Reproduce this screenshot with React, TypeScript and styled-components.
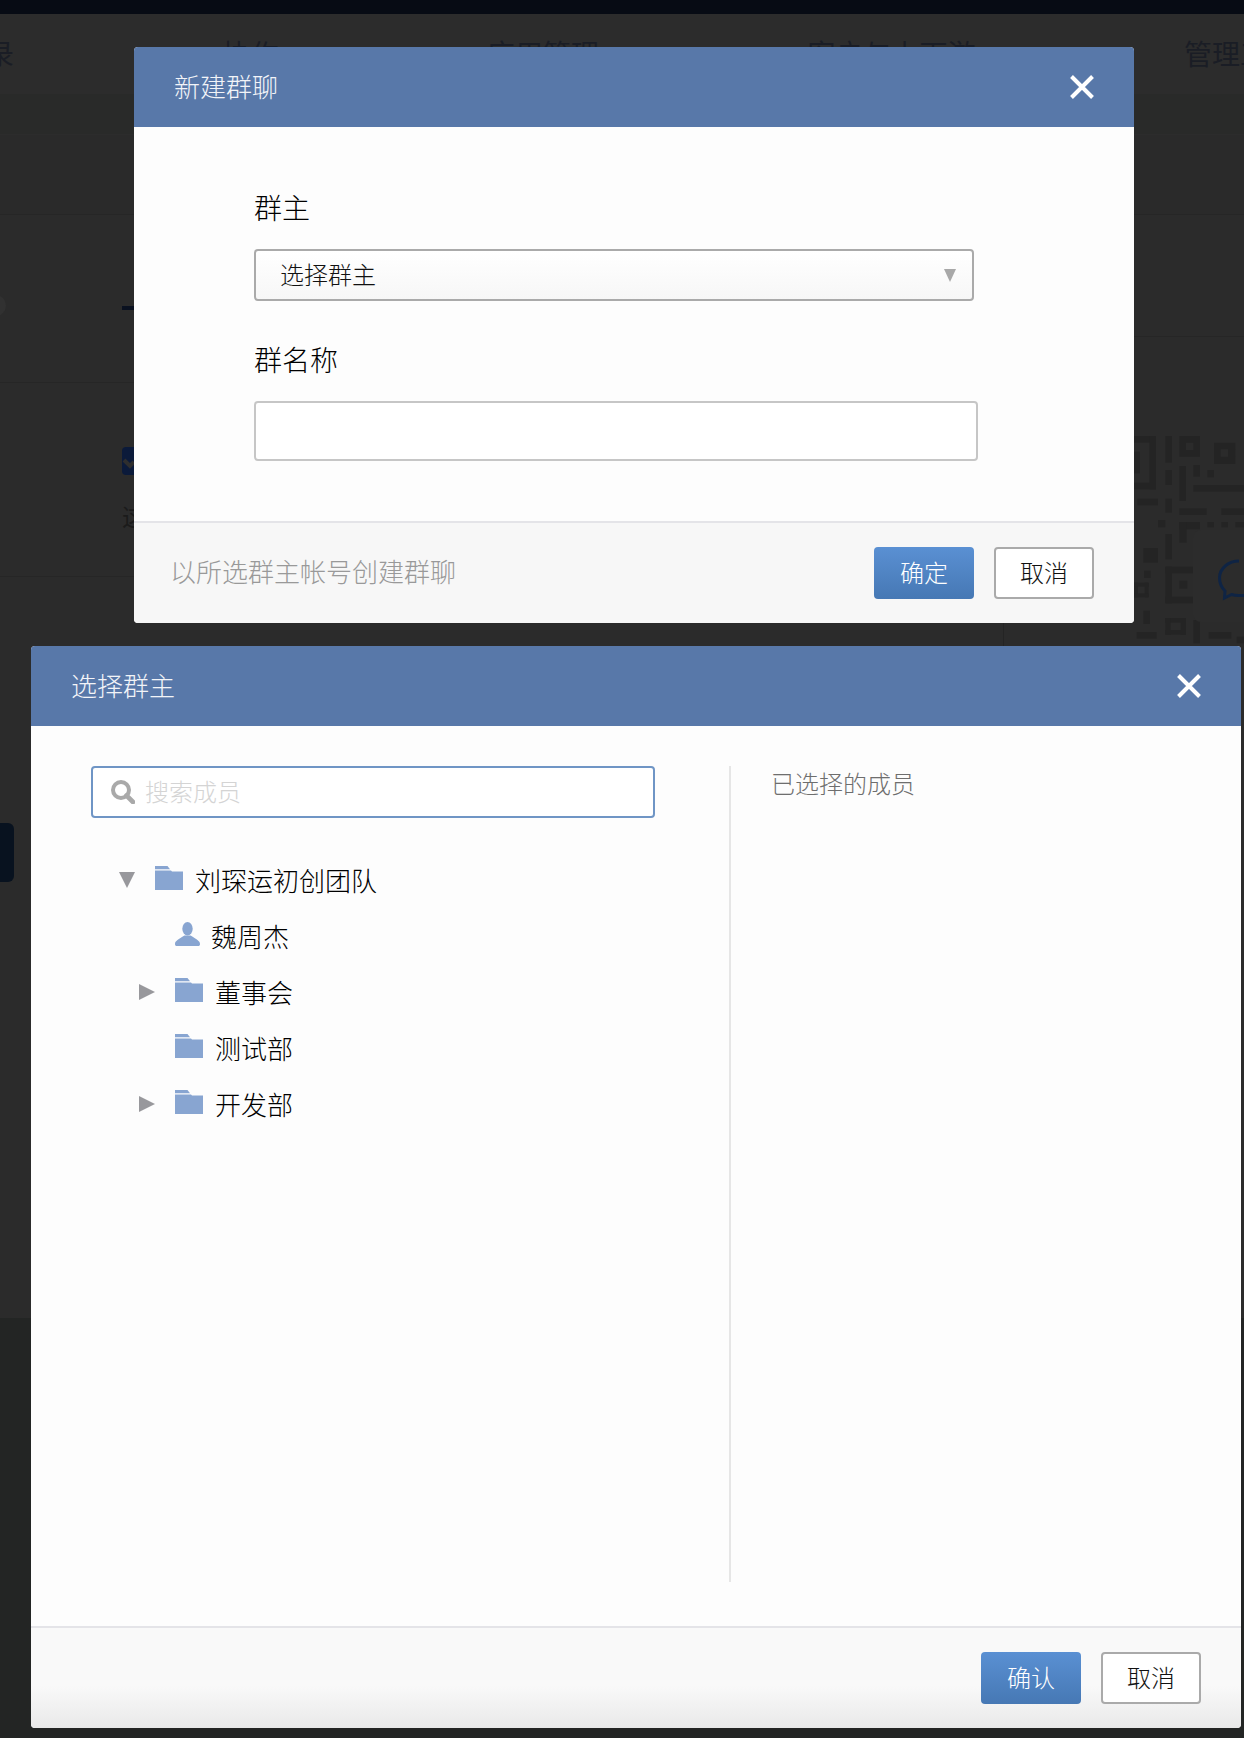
import React from 'react';
import styled, { createGlobalStyle } from 'styled-components';

const GlobalStyle = createGlobalStyle`
  html, body {
    margin: 0;
    padding: 0;
    background: #232524;
  }
  * {
    box-sizing: border-box;
  }
  body {
    font-family: "Noto Sans CJK SC", "Liberation Sans", sans-serif;
  }
`;

const QR_CELLS = [
  [0, 48, 78, 20], [58, 48, 20, 160], [0, 188, 78, 20], [12, 95, 18, 65],
  [106, 48, 20, 80], [106, 150, 20, 45], [148, 138, 20, 105], [190, 135, 20, 35],
  [232, 150, 20, 22], [190, 195, 152, 20], [22, 236, 62, 20], [106, 236, 20, 42],
  [148, 265, 82, 20], [274, 265, 68, 20], [84, 300, 22, 22], [148, 306, 62, 22],
  [148, 306, 22, 62], [232, 306, 20, 16], [274, 306, 20, 16], [316, 306, 26, 16],
  [106, 342, 20, 76], [40, 384, 44, 44], [42, 452, 20, 22], [106, 440, 84, 20],
  [106, 440, 20, 110], [106, 530, 84, 20], [148, 482, 24, 24], [12, 488, 12, 44],
  [12, 488, 44, 12], [44, 488, 12, 44], [12, 520, 44, 12], [40, 572, 20, 40],
  [106, 594, 62, 14], [106, 594, 16, 50], [152, 594, 16, 50], [106, 630, 62, 14],
  [20, 636, 60, 20], [190, 600, 20, 70], [236, 636, 68, 20], [320, 650, 22, 20],
];

function QrCode() {
  return (
    <QrSvg viewBox="0 0 342 690">
      {QR_CELLS.map(([x, y, w, h], i) => (
        <rect key={i} x={x} y={y} width={w} height={h} fill="#242424" />
      ))}
      <path d="M148 48h62v62h-62z M168 68v22h22v-22z" fill="#242424" fillRule="evenodd" />
      <path d="M252 68h64v64h-64z M272 88v22h22v-22z" fill="#242424" fillRule="evenodd" />
    </QrSvg>
  );
}

function CloseIcon() {
  return (
    <svg width="24" height="24" viewBox="0 0 24 24">
      <path d="M1.5 1.5L22.5 22.5M22.5 1.5L1.5 22.5" stroke="#fff" strokeWidth="4" fill="none" />
    </svg>
  );
}

function SearchIcon() {
  return (
    <SearchSvg width="24" height="24" viewBox="0 0 24 24">
      <circle cx="10" cy="10" r="8" stroke="#a9a9a9" strokeWidth="4" fill="none" />
      <path d="M15.5 15.5L22 22" stroke="#a9a9a9" strokeWidth="4.6" strokeLinecap="round" />
    </SearchSvg>
  );
}

function FolderIcon() {
  return (
    <TreeSvg $gap={12} width="28" height="24" viewBox="0 0 28 24">
      <path d="M0 0H12.5L15 3.2H0Z" fill="#88a5d1" />
      <path d="M0 4.6H16L17 5.6H28V24H0Z" fill="#88a5d1" />
    </TreeSvg>
  );
}

function PersonIcon() {
  return (
    <TreeSvg $gap={11} width="25" height="24" viewBox="0 0 25 24">
      <ellipse cx="12.5" cy="6.8" rx="5.2" ry="6.8" fill="#88a5d1" />
      <path
        d="M0 22C0 19 3.6 17.4 9.4 13.6H15.6C21.4 17.4 25 19 25 22C25 23.4 24.4 24 23 24H2C.6 24 0 23.4 0 22Z"
        fill="#88a5d1"
      />
    </TreeSvg>
  );
}

type TreeNode = {
  label: string;
  level: number;
  kind: 'folder' | 'person';
  caret?: 'open' | 'closed';
};

const TREE: TreeNode[] = [
  { label: '刘琛运初创团队', level: 0, kind: 'folder', caret: 'open' },
  { label: '魏周杰', level: 1, kind: 'person' },
  { label: '董事会', level: 1, kind: 'folder', caret: 'closed' },
  { label: '测试部', level: 1, kind: 'folder' },
  { label: '开发部', level: 1, kind: 'folder', caret: 'closed' },
];

function App() {
  return (
    <Page>
      <GlobalStyle />
      <TopBar />
      <NavBar>
        <NavItem>通讯录</NavItem>
        <NavItem>协作</NavItem>
        <NavItem>应用管理</NavItem>
        <NavItem>客户与上下游</NavItem>
        <NavItem>管理工具</NavItem>
      </NavBar>
      <SubBar />
      <ToolBand />
      <Main>
        <LeftPane>
          <SectionHead>
            <Pill />
            <Dash />
          </SectionHead>
          <SectionOption>
            <CheckBox>
              <svg width="12" height="28" viewBox="0 0 12 28">
                <path d="M2 13L8 19L12 15" stroke="#2e2e2e" strokeWidth="4" fill="none" />
              </svg>
            </CheckBox>
            <OptionText>这</OptionText>
          </SectionOption>
          <SectionRest>
            <SideTab />
          </SectionRest>
        </LeftPane>
        <RightPane>
          <RightHead />
          <RightBody>
            <QrCode />
            <ChatCard>
              <svg width="51" height="60" viewBox="0 0 51 60">
                <path
                  d="M46 8C36 8 26.5 15 26.5 25C26.5 31 29 35 32 38L31.5 45L38.5 41.5C41 42.3 43.5 42.5 46 42.5H51"
                  stroke="#0f2444"
                  strokeWidth="3"
                  fill="none"
                />
              </svg>
            </ChatCard>
          </RightBody>
        </RightPane>
      </Main>
      <BottomBand />

      <OwnerDialog>
        <DialogHeader>
          <DialogTitle>新建群聊</DialogTitle>
          <CloseIcon />
        </DialogHeader>
        <OwnerBody>
          <FieldLabel>群主</FieldLabel>
          <SelectBox>
            <span>选择群主</span>
            <SelectArrow />
          </SelectBox>
          <FieldLabel $second>群名称</FieldLabel>
          <NameInput />
        </OwnerBody>
        <DialogFooter>
          <FooterHint>以所选群主帐号创建群聊</FooterHint>
          <FooterButtons>
            <ActionButton $primary>确定</ActionButton>
            <ActionButton>取消</ActionButton>
          </FooterButtons>
        </DialogFooter>
      </OwnerDialog>

      <PickerDialog>
        <DialogHeader>
          <DialogTitle>选择群主</DialogTitle>
          <CloseIcon />
        </DialogHeader>
        <PickerBody>
          <PickerLeft>
            <SearchBox>
              <SearchIcon />
              <SearchInput placeholder="搜索成员" />
            </SearchBox>
            <TreeList>
              {TREE.map((node) => (
                <TreeRow key={node.label} $level={node.level}>
                  <CaretSlot>{node.caret && <Caret $open={node.caret === 'open'} />}</CaretSlot>
                  {node.kind === 'folder' ? <FolderIcon /> : <PersonIcon />}
                  <TreeLabel>{node.label}</TreeLabel>
                </TreeRow>
              ))}
            </TreeList>
          </PickerLeft>
          <PickerRight>
            <SelectedTitle>已选择的成员</SelectedTitle>
          </PickerRight>
        </PickerBody>
        <DialogFooter $shaded>
          <span />
          <FooterButtons>
            <ActionButton $primary>确认</ActionButton>
            <ActionButton>取消</ActionButton>
          </FooterButtons>
        </DialogFooter>
      </PickerDialog>
    </Page>
  );
}

export default App;

const Page = styled.div`
  position: relative;
  width: 1244px;
  height: 1738px;
  overflow: hidden;
  background: #2b2b2b;
`;

const TopBar = styled.div`
  height: 14px;
  background: #070b14;
`;

const NavBar = styled.nav`
  display: flex;
  gap: 208.5px;
  height: 80px;
  margin-left: -70px;
  padding-top: 19px;
  background: #2c2c2c;
  white-space: nowrap;
`;

const NavItem = styled.span`
  font-size: 28px;
  line-height: 40px;
  font-weight: 400;
  color: #1a1d25;
`;

const SubBar = styled.div`
  height: 40px;
  background: #292a29;
`;

const ToolBand = styled.div`
  height: 81px;
  background: #2a2a2a;
  border-top: 1px solid #2c2c2c;
  border-bottom: 1px solid #262626;
`;

const Main = styled.div`
  display: flex;
  height: 1103px;
`;

const LeftPane = styled.div`
  width: 1004px;
  border-right: 1px solid #242424;
`;

const SectionHead = styled.div`
  display: flex;
  align-items: flex-start;
  height: 168px;
  padding-top: 80px;
  border-bottom: 1px solid #262626;
`;

const Pill = styled.div`
  width: 21px;
  height: 21px;
  margin-left: -15px;
  border-radius: 50%;
  background: #313131;
`;

const Dash = styled.div`
  width: 20px;
  height: 4px;
  margin: 11px 0 0 116px;
  background: #0a1120;
`;

const SectionOption = styled.div`
  height: 194px;
  padding: 64px 0 0 122px;
  border-bottom: 1px solid #262626;
`;

const CheckBox = styled.div`
  width: 28px;
  height: 28px;
  border-radius: 4px;
  background: #0b1a3a;
`;

const OptionText = styled.div`
  margin-top: 26px;
  font-size: 24px;
  line-height: 30px;
  font-weight: 400;
  color: #1b1b1b;
`;

const SectionRest = styled.div`
  padding-top: 246px;
`;

const SideTab = styled.div`
  width: 14px;
  height: 59px;
  border-radius: 0 6px 6px 0;
  background: #08121f;
`;

const RightPane = styled.div`
  flex: 1;
`;

const RightHead = styled.div`
  height: 122px;
  border-bottom: 1px solid #262626;
`;

const RightBody = styled.div`
  position: relative;
  padding: 83px 0 0 126px;
`;

const QrSvg = styled.svg`
  display: block;
  width: 114px;
  height: 230px;
`;

const ChatCard = styled.div`
  position: absolute;
  top: 193px;
  right: 0;
  width: 51px;
  height: 92px;
  padding-top: 25px;
  border-radius: 8px 0 0 8px;
  background: #2c2c2c;

  svg {
    display: block;
    margin-top: -2px;
  }
`;

const BottomBand = styled.div`
  height: 420px;
  background: #232524;
`;

const Dialog = styled.section`
  position: absolute;
  display: flex;
  flex-direction: column;
  border-radius: 4px;
  overflow: hidden;
  background: #fdfdfd;
`;

const OwnerDialog = styled(Dialog)`
  left: 134px;
  top: 47px;
  width: 1000px;
  height: 576px;
`;

const PickerDialog = styled(Dialog)`
  left: 31px;
  top: 646px;
  width: 1210px;
  height: 1082px;
`;

const DialogHeader = styled.header`
  display: flex;
  align-items: center;
  justify-content: space-between;
  flex: none;
  height: 80px;
  padding: 0 40px;
  background: #5878a9;
`;

const DialogTitle = styled.h2`
  margin: 0;
  padding-bottom: 2px;
  font-size: 26px;
  line-height: 36px;
  font-weight: 300;
  color: #f2f4f8;
`;

const OwnerBody = styled.div`
  flex: 1;
  padding: 60px 0 0 120px;
`;

const FieldLabel = styled.label<{ $second?: boolean }>`
  display: block;
  margin-top: ${(p) => (p.$second ? '38px' : '0')};
  margin-bottom: 22px;
  font-size: 28px;
  line-height: 40px;
  font-weight: 300;
  color: #000;
`;

const SelectBox = styled.div`
  display: flex;
  align-items: center;
  justify-content: space-between;
  width: 720px;
  height: 52px;
  padding: 0 16px 0 24px;
  border: 2px solid #aaa;
  border-radius: 4px;
  background: linear-gradient(#fff, #f7f7f7);
  font-size: 24px;
  font-weight: 300;
  color: #111;

  span {
    padding-bottom: 3px;
  }
`;

const SelectArrow = styled.i`
  width: 0;
  height: 0;
  border-style: solid;
  border-width: 13px 6px 0;
  border-color: #a8a8a8 transparent transparent;
`;

const NameInput = styled.input`
  display: block;
  width: 724px;
  height: 60px;
  border: 2px solid #c6c6c6;
  border-radius: 4px;
  background: #fff;
  outline: none;
`;

const DialogFooter = styled.footer<{ $shaded?: boolean }>`
  display: flex;
  align-items: center;
  justify-content: space-between;
  flex: none;
  height: 102px;
  padding: 0 40px 0 36px;
  border-top: 2px solid #e4e4e8;
  background: ${(p) =>
    p.$shaded ? 'linear-gradient(#f9f9f9 58%, #e9e9e9)' : '#f7f7f7'};
`;

const FooterHint = styled.span`
  padding-bottom: 5px;
  font-size: 26px;
  font-weight: 300;
  color: #999;
`;

const FooterButtons = styled.div`
  display: flex;
  gap: 20px;
`;

const ActionButton = styled.button<{ $primary?: boolean }>`
  width: 100px;
  height: 52px;
  padding: 0 0 4px;
  border-radius: 4px;
  border: ${(p) => (p.$primary ? '0' : '2px solid #aaa')};
  background: ${(p) => (p.$primary ? 'linear-gradient(#5a90d3, #4678b4)' : '#fff')};
  color: ${(p) => (p.$primary ? '#fff' : '#111')};
  font-family: inherit;
  font-size: 24px;
  font-weight: 300;
`;

const PickerBody = styled.div`
  display: flex;
  flex: 1;
  padding: 40px 0 0 60px;
`;

const PickerLeft = styled.div`
  width: 640px;
  height: 816px;
  border-right: 2px solid #e6e6e6;
`;

const SearchBox = styled.div`
  display: flex;
  align-items: center;
  width: 564px;
  height: 52px;
  padding-left: 18px;
  border: 2px solid #6f95c5;
  border-radius: 4px;
  background: #fff;
`;

const SearchSvg = styled.svg`
  flex: none;
`;

const SearchInput = styled.input`
  flex: 1;
  min-width: 0;
  margin-left: 10px;
  padding: 0 0 3px;
  border: 0;
  outline: none;
  background: transparent;
  font-family: inherit;
  font-size: 24px;
  font-weight: 300;

  &::placeholder {
    color: #d4d4d4;
    opacity: 1;
  }
`;

const TreeList = styled.div`
  margin-top: 32px;
`;

const TreeRow = styled.div<{ $level: number }>`
  display: flex;
  align-items: center;
  height: 56px;
  padding-left: ${(p) => 28 + p.$level * 20}px;
`;

const CaretSlot = styled.span`
  display: flex;
  flex: none;
  width: 36px;
  padding-top: 3px;
`;

const Caret = styled.i<{ $open?: boolean }>`
  width: 0;
  height: 0;
  border-style: solid;
  border-width: ${(p) => (p.$open ? '16px 8px 0' : '8px 0 8px 16px')};
  border-color: ${(p) =>
    p.$open ? '#98989c transparent transparent' : 'transparent transparent transparent #98989c'};
`;

const TreeSvg = styled.svg<{ $gap: number }>`
  flex: none;
  margin-right: ${(p) => p.$gap}px;
`;

const TreeLabel = styled.span`
  padding-top: 3px;
  font-size: 26px;
  font-weight: 300;
  color: #000;
`;

const PickerRight = styled.div`
  padding-left: 40px;
`;

const SelectedTitle = styled.div`
  margin-top: -1px;
  font-size: 24px;
  line-height: 36px;
  font-weight: 300;
  color: #6e6e6e;
`;
